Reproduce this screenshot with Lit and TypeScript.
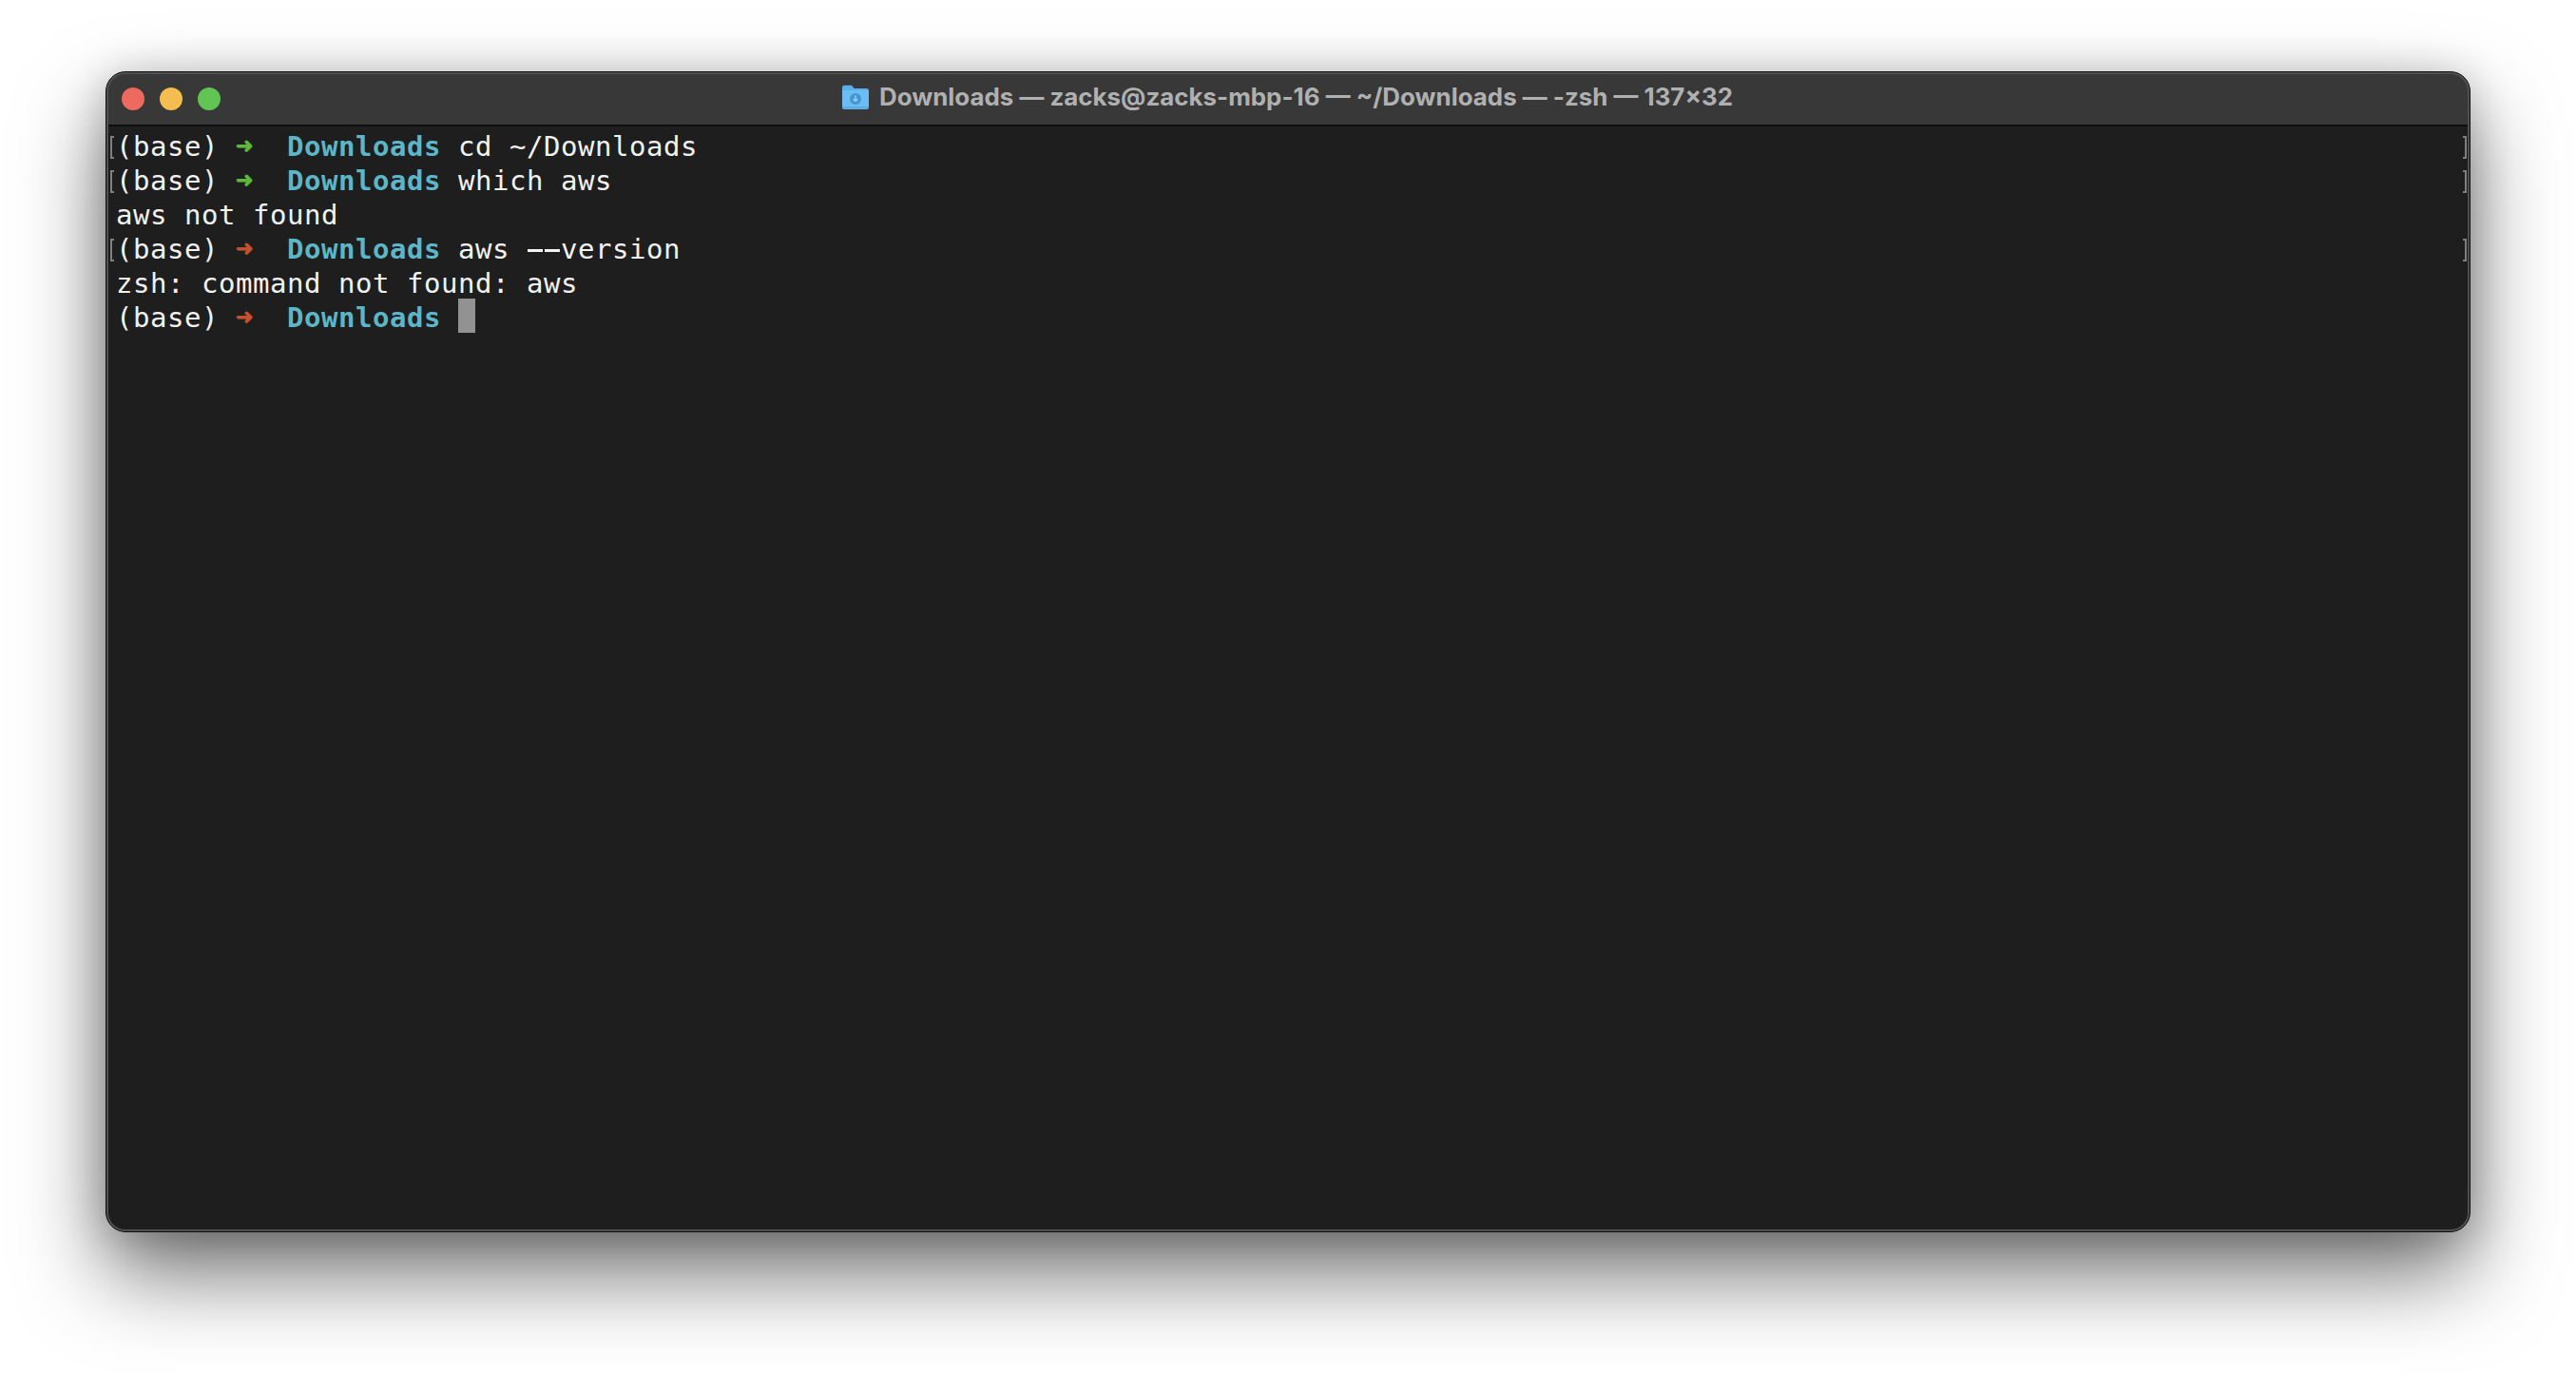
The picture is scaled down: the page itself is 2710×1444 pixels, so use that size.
import { LitElement, html, css, nothing } from "lit";
import { customElement } from "lit/decorators.js";

type Seg = { t: string; c?: string };
const B: Seg = { t: "(base) " };
const DL: Seg = { t: "Downloads", c: "dir" };
const prompt = (ok: boolean): Seg[] => [B, { t: "➜", c: ok ? "arrow ok" : "arrow bad" }, { t: "  " }, DL, { t: " " }];
const rows: { marks: boolean; segs: Seg[]; cursor?: boolean }[] = [
  { marks: true, segs: [...prompt(true), { t: "cd ~/Downloads" }] },
  { marks: true, segs: [...prompt(true), { t: "which aws" }] },
  { marks: false, segs: [{ t: "aws not found" }] },
  { marks: true, segs: [...prompt(false), { t: "aws " }, { t: "--", c: "dash" }, { t: "version" }] },
  { marks: false, segs: [{ t: "zsh: command not found: aws" }] },
  { marks: false, segs: prompt(false), cursor: true },
];

@customElement("app-root")
export class AppRoot extends LitElement {
  static styles = css`
    :host { display: block; width: 2710px; height: 1444px; background: #fff; overflow: hidden; box-sizing: border-box; padding: 75px 111px 148px 111px; }
    .shadow { height: 100%; border-radius: 21px; box-shadow: 0 44px 90px rgba(0,0,0,.55), 0 4px 44px rgba(0,0,0,.2); }
    .win { height: 100%; display: flex; flex-direction: column; border-radius: 21px; overflow: hidden; box-sizing: border-box; border: 1px solid #0c0c0c; position: relative; background: #1e1e1e; }
    .win::after { content: ""; position: absolute; inset: 0; border-radius: 20px; border: 2px solid #505050; pointer-events: none; }
    .title { height: 55px; flex: none; background: #383838; border-bottom: 2px solid #0e0e0e; display: flex; align-items: center; position: relative; box-sizing: content-box; }
    .lights { display: flex; gap: 16px; padding-left: 16px; }
    .lights i { width: 24px; height: 24px; border-radius: 50%; display: block; }
    .r { background: #ee6a5f; } .y { background: #f4bd4f; } .g { background: #61c554; }
    .cap { position: absolute; left: 774px; right: 0; top: 13px; height: 26px; display: flex; align-items: center; gap: 11px; font: 700 25.9px/26px "Inter", sans-serif; color: #b0b0b0; white-space: nowrap; }
    .cap svg { width: 28px; height: 26px; flex: none; }
    .body { flex: 1; background: #1e1e1e; padding-top: 1px; font: 400 29px/36px "DejaVu Sans Mono", monospace; letter-spacing: 0.54px; color: #f2f2f2; }
    .row { height: 36px; display: flex; align-items: center; white-space: pre; }
    .gut { width: 6px; flex: none; padding-left: 4px; box-sizing: content-box; display: flex; }
    .txt { flex: 1; display: flex; align-items: center; height: 36px; }
    .line { padding-top: 4px; line-height: 30px; }
    .mark { width: 4px; height: 24px; margin-top: 5px; border: 2px solid #7f7f7f; box-sizing: border-box; }
    .ml { border-right: 0; }
    .mr { border-left: 0; margin-right: 3px; }
    .dir { color: #5cb6c7; font-weight: 700; }
    .arrow { display: inline-block; width: 18px; text-align: center; font-size: 30px; line-height: 0; letter-spacing: 0; font-weight: 700; -webkit-text-stroke: 0.8px currentColor; }
    .dash {
      display: inline-block;
      background-image: linear-gradient(currentColor, currentColor), linear-gradient(currentColor, currentColor);
      background-size: 16px 3px, 16px 3px;
      background-position: 1px 15px, 19px 15px;
      background-repeat: no-repeat;
    }
    .ok { color: #5fb83b; }
    .bad { color: #c5522f; }
    .cursor { width: 18px; height: 36px; background: #929292; display: block; flex: none; }
  `;

  render() {
    return html`
      <div class="shadow"><div class="win">
        <div class="title">
          <div class="lights"><i class="r"></i><i class="y"></i><i class="g"></i></div>
          <div class="cap">
            <svg viewBox="0 0 28 26">
              <path d="M0 3.2A2.4 2.4 0 0 1 2.4.8h6.4c1 0 1.6.4 2.2 1.1L12.6 4h13A2.4 2.4 0 0 1 28 6.4V23.4a2.4 2.4 0 0 1-2.4 2.4H2.4A2.4 2.4 0 0 1 0 23.4z" fill="#5aaeea"/>
              <path d="M0 6h28v17.4a2.4 2.4 0 0 1-2.4 2.4H2.4A2.4 2.4 0 0 1 0 23.4z" fill="#6cbdf3"/>
              <path d="M0 24.6h28v-1.2a2.4 2.4 0 0 1-.1 0H0z" fill="#4a9cd8"/>
              <circle cx="14" cy="15" r="6" fill="#4595d6"/>
              <path d="M14 11.4v6M11.6 15l2.4 2.4 2.4-2.4" fill="none" stroke="#8fd0fa" stroke-width="1.5"/>
            </svg>
            <span>Downloads — zacks@zacks-mbp-16 — ~/Downloads — -zsh — 137×32</span>
          </div>
        </div>
        <div class="body">
          ${rows.map((r) => html`
            <div class="row">
              <div class="gut">${r.marks ? html`<span class="mark ml"></span>` : nothing}</div>
              <div class="txt">
                <div class="line">${r.segs.map((s) => html`<span class=${s.c ?? ""}>${s.t}</span>`)}</div>
                ${r.cursor ? html`<span class="cursor"></span>` : nothing}
              </div>
              ${r.marks ? html`<span class="mark mr"></span>` : nothing}
            </div>
          `)}
        </div>
      </div></div>
    `;
  }
}
